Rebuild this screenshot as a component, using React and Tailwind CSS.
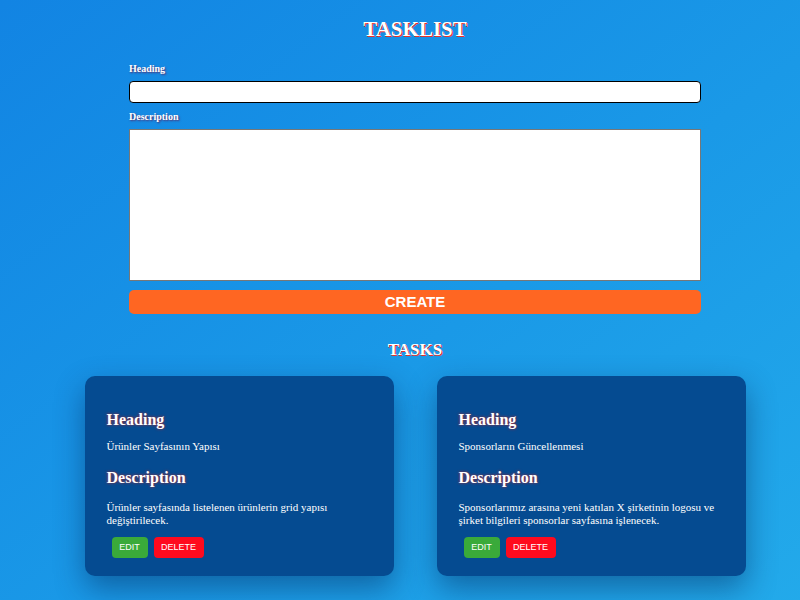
const tasks = [
  {
    heading: "Ürünler Sayfasının Yapısı",
    description: "Ürünler sayfasında listelenen ürünlerin grid yapısı değiştirilecek.",
  },
  {
    heading: "Sponsorların Güncellenmesi",
    description:
      "Sponsorlarımız arasına yeni katılan X şirketinin logosu ve şirket bilgileri sponsorlar sayfasına işlenecek.",
  },
];

const TaskCard = ({task}) => (
  <div className="w-[309px] h-[200px] rounded-[10px] bg-[#054b91] px-[22px] pt-[34px] shadow-[0_12px_30px_rgba(0,30,80,0.45)]">
    <h2 className="text-[16px] leading-[20px] font-bold text-white [text-shadow:0_0_3px_#c0262b]">
      Heading
    </h2>
    <p className="mt-[10px] text-[11px] leading-[13px] text-white">{task.heading}</p>
    <h2 className="mt-[15px] text-[16px] leading-[20px] font-bold text-white [text-shadow:0_0_3px_#c0262b]">
      Description
    </h2>
    <p className="mt-[13px] text-[11px] leading-[13px] text-white">{task.description}</p>
    <div className="flex gap-[6px] mt-[10px] ml-[5px] font-['Liberation_Sans',sans-serif]">
      <button className="w-[36px] h-[21px] rounded-[4px] bg-[#3aaa3a] text-white text-[9px]">EDIT</button>
      <button className="w-[50px] h-[21px] rounded-[4px] bg-[#ff0a1e] text-white text-[9px]">DELETE</button>
    </div>
  </div>
);

const App = () => {
  return (
    <main className="min-h-screen pl-[30px] pb-[40px] bg-linear-to-br from-[#1284e3] to-[#23aaea] font-['Liberation_Serif',serif]">
      <div className="flex flex-col items-center">
        <h1 className="mt-[16px] text-[21px] leading-[26px] font-bold text-white [text-shadow:1px_1px_0_#e8322a]">
          TASKLIST
        </h1>
        <div className="w-[572px] mt-[20px] flex flex-col">
          <label className="text-[10px] leading-[13px] font-bold text-white [text-shadow:1px_1px_2px_#5a2a6a]">
            Heading
          </label>
          <input className="mt-[6px] h-[22px] bg-white border border-black rounded-[4px] outline-none" />
          <label className="mt-[7px] text-[10px] leading-[13px] font-bold text-white [text-shadow:1px_1px_2px_#5a2a6a]">
            Description
          </label>
          <textarea className="mt-[6px] h-[152px] bg-white border border-[#777] resize-none outline-none" />
          <button className="mt-[9px] h-[24px] rounded-[5px] bg-[#ff6622] text-white text-[15px] font-bold font-['Liberation_Sans',sans-serif]">
            CREATE
          </button>
        </div>
        <h2 className="mt-[26px] text-[17px] leading-[20px] font-bold text-white [text-shadow:1px_1px_0_#e8322a]">
          TASKS
        </h2>
        <div className="mt-[16px] flex gap-[43px]">
          {tasks.map((t, i) => (
            <TaskCard key={i} task={t} />
          ))}
        </div>
      </div>
    </main>
  );
};

export default App;
